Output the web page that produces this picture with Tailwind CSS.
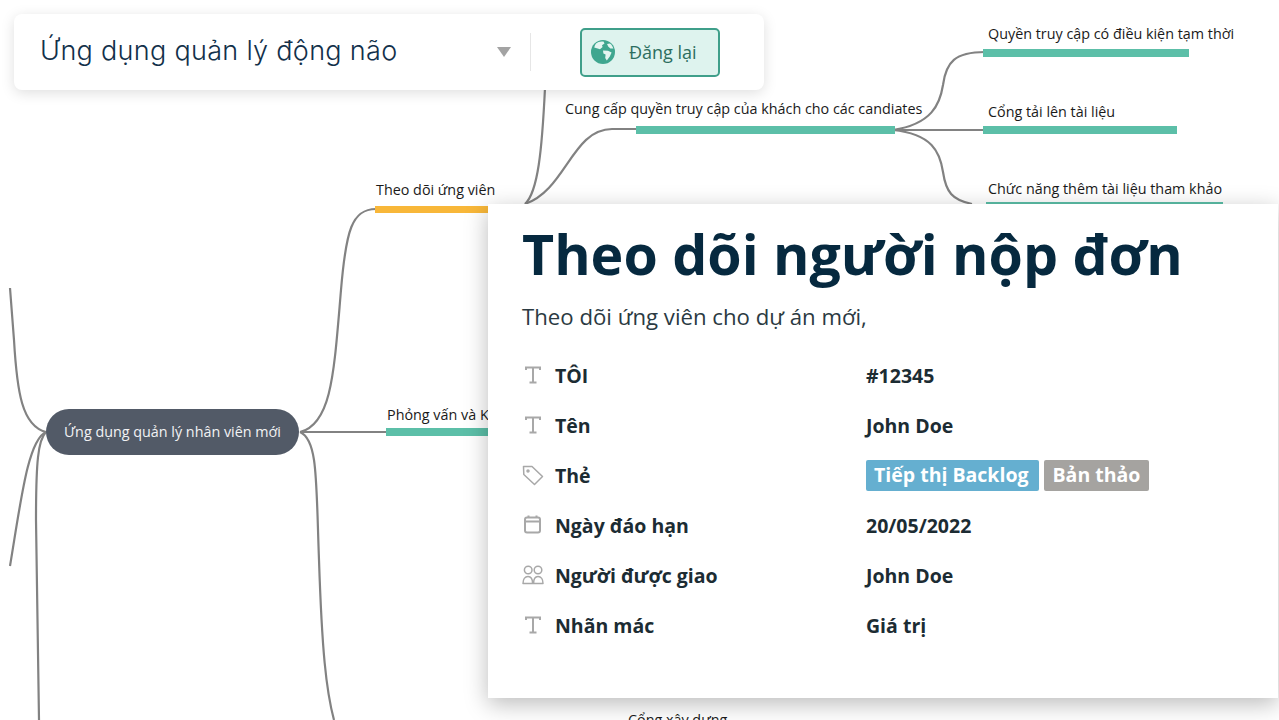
<!DOCTYPE html>
<html lang="en">
<head>
  <meta charset="UTF-8" />
  <meta name="viewport" content="width=device-width, initial-scale=1.0" />
  <title>Theo dõi người nộp đơn</title>
  <script src="https://cdn.jsdelivr.net/npm/@tailwindcss/browser@4"></script>
</head>
<body class="bg-white overflow-hidden font-['Open_Sans',sans-serif]">
  <div class="relative w-[1279px] h-[720px] overflow-hidden bg-white">

    <!-- mind map connectors -->
    <svg class="absolute inset-0" width="1279" height="720" fill="none" stroke="#828282" stroke-width="2.2">
      <path d="M300 432C332 424 334 372 341 290C346 230 352 209 376 209" />
      <path d="M300 432H388" />
      <path d="M300 432C318 440 316 480 319 560C322 650 326 690 334 720" />
      <path d="M46 432C22 426 17 392 14 340L10 288" />
      <path d="M46 432C28 440 21 500 10 566" />
      <path d="M46 432C38 440 36 462 36 520C37 600 39 680 39 720" />
      <path d="M525 204C538 192 542 150 545 88" />
      <path d="M525 204C566 190 572 129 612 129H638" />
      <path d="M893 130C932 124 940 104 943 85C946 62 955 52 985 52" />
      <path d="M893 130H985" />
      <path d="M893 130C932 134 940 152 943 172C946 192 952 200 972 204" />
    </svg>

    <!-- mind map nodes -->
    <div class="absolute left-[46px] top-[409px] w-[253px] h-[46px] rounded-[23px] bg-[#525a67] flex items-center justify-center text-[14.35px] text-[#f1f2f4]">Ứng dụng quản lý nhân viên mới</div>

    <div class="absolute left-[376px] top-[180px] text-[14.35px] leading-[19px] text-[#1a1a1a]">Theo dõi ứng viên</div>
    <div class="absolute left-[375px] top-[206px] w-[114px] h-[7px] bg-[#f8b739]"></div>

    <div class="absolute left-[387px] top-[405px] text-[14.35px] leading-[19px] text-[#1a1a1a]">Phỏng vấn và Kiểm tra</div>
    <div class="absolute left-[386px] top-[428px] w-[110px] h-[8px] bg-[#5cbfa8]"></div>

    <div class="absolute left-[565px] top-[99px] text-[14.35px] leading-[19px] text-[#1a1a1a]">Cung cấp quyền truy cập của khách cho các candiates</div>
    <div class="absolute left-[636px] top-[126px] w-[259px] h-[8px] bg-[#5cbfa8]"></div>

    <div class="absolute left-[988px] top-[24px] text-[14.35px] leading-[19px] text-[#1a1a1a]">Quyền truy cập có điều kiện tạm thời</div>
    <div class="absolute left-[983px] top-[49px] w-[206px] h-[8px] bg-[#5cbfa8]"></div>

    <div class="absolute left-[988px] top-[102px] text-[14.35px] leading-[19px] text-[#1a1a1a]">Cổng tải lên tài liệu</div>
    <div class="absolute left-[983px] top-[126px] w-[194px] h-[8px] bg-[#5cbfa8]"></div>

    <div class="absolute left-[988px] top-[179px] text-[14.35px] leading-[19px] text-[#1a1a1a]">Chức năng thêm tài liệu tham khảo</div>
    <div class="absolute left-[986px] top-[202px] w-[237px] h-[8px] bg-[#5cbfa8]"></div>

    <div class="absolute left-[628px] top-[710px] text-[14.35px] leading-[19px] text-[#1a1a1a]">Cổng xây dựng</div>

    <!-- toolbar -->
    <div class="absolute left-[14px] top-[14px] w-[750px] h-[76px] rounded-lg bg-white shadow-[0_3px_14px_rgba(0,0,0,0.13)] flex items-center">
      <h2 class="ml-[26px] mb-[1px] w-[457px] text-[27px] font-light font-['Inter',sans-serif] tracking-[0.3px] text-[#12304a]">Ứng dụng quản lý động não</h2>
      <svg width="14" height="10" viewBox="0 0 14 10" class="shrink-0"><path d="M0 0H14L7 10Z" fill="#a3a3a3" /></svg>
      <div class="ml-[19px] w-px h-[38px] bg-[#e6e6e6]"></div>
      <button class="ml-[49px] w-[140px] h-[49px] rounded-[5px] border-2 border-[#3f9f8a] bg-[#def3ee] flex items-center text-[#2c6e60] text-[18px]">
        <svg width="24" height="24" viewBox="0 0 24 24" class="ml-[9px] shrink-0">
          <circle cx="12" cy="12" r="12" fill="#3fa68f" />
          <path d="M5 3.5C7 1.6 10 1 12.5 1.6L13.5 3.6L11 5.2L11.6 7L9 9.2L5.8 8.2L3.2 7.4C3.6 6 4.2 4.6 5 3.5Z" fill="#e4f5f1" />
          <path d="M16 4L19 3.4C20.6 4.8 21.8 6.6 22.4 8.6L19.4 8.4L17.4 6.8Z" fill="#e4f5f1" />
          <path d="M12 10.6L17 10.8L20.6 12.6L18.8 16.6L15.8 20.4L14.2 18L14.6 14.6L12.4 13.4Z" fill="#e4f5f1" />
        </svg>
        <span class="ml-[14px]">Đăng lại</span>
      </button>
    </div>

    <!-- detail card -->
    <section class="absolute left-[488px] top-[204px] w-[790px] h-[494px] bg-white shadow-[0_6px_22px_rgba(0,0,0,0.27)] pl-[34px] pt-[15px] text-[#1c2c33]">
      <h1 class="text-[55.5px] leading-[70px] font-bold text-[#06293f]">Theo dõi người nộp đơn</h1>
      <p class="mt-[13px] text-[22.2px] leading-[30px] text-[#2b3a42]">Theo dõi ứng viên cho dự án mới,</p>

      <div class="mt-[19px] flex flex-col text-[19.5px] font-bold">
        <div class="h-[50px] flex items-center">
          <svg width="22" height="22" viewBox="0 0 22 22" fill="none" stroke="#a8a8a8" stroke-width="2" class="shrink-0 mb-[2px]"><path d="M4 6V3.5H18V6M11 3.5V18.5M7.5 18.5H14.5" /></svg>
          <span class="ml-[11px] w-[311px]">TÔI</span><span>#12345</span>
        </div>
        <div class="h-[50px] flex items-center">
          <svg width="22" height="22" viewBox="0 0 22 22" fill="none" stroke="#a8a8a8" stroke-width="2" class="shrink-0 mb-[2px]"><path d="M4 6V3.5H18V6M11 3.5V18.5M7.5 18.5H14.5" /></svg>
          <span class="ml-[11px] w-[311px]">Tên</span><span>John Doe</span>
        </div>
        <div class="h-[50px] flex items-center">
          <svg width="22" height="22" viewBox="0 0 22 22" fill="none" stroke="#a8a8a8" stroke-width="1.5" class="shrink-0 mb-[2px]"><path d="M1.5 2.5H10L20.5 12.5L12.5 20.5L1.8 10.5Z" stroke-linejoin="round" /><circle cx="6" cy="7" r="1" /></svg>
          <span class="ml-[11px] w-[311px]">Thẻ</span>
          <span class="h-[31px] mb-[2px] pl-[8px] pr-[10px] rounded-[2px] bg-[#65afd0] text-white flex items-center">Tiếp thị Backlog</span>
          <span class="ml-[5px] h-[31px] mb-[2px] px-[9px] rounded-[2px] bg-[#a5a3a0] text-white flex items-center">Bản thảo</span>
        </div>
        <div class="h-[50px] flex items-center">
          <svg width="22" height="22" viewBox="0 0 22 22" fill="none" stroke="#a8a8a8" stroke-width="2" class="shrink-0 mb-[2px]"><rect x="3" y="3.5" width="15" height="15" rx="2" /><path d="M3 7.5H18M6.5 1.5V3.5M14.5 1.5V3.5" /></svg>
          <span class="ml-[11px] w-[311px]">Ngày đáo hạn</span><span>20/05/2022</span>
        </div>
        <div class="h-[50px] flex items-center">
          <svg width="22" height="22" viewBox="0 0 22 22" fill="none" stroke="#a8a8a8" stroke-width="1.5" class="shrink-0 mb-[2px]"><circle cx="6.2" cy="6" r="3.8" /><circle cx="16" cy="6" r="3.8" /><path d="M1 19.5C1 15.5 3 12.5 6 12.5C9 12.5 10.6 15.5 10.6 19.5ZM11.6 19.5C11.6 15.5 13 12.5 16 12.5C19 12.5 21 15.5 21 19.5Z" stroke-linejoin="round" /></svg>
          <span class="ml-[11px] w-[311px]">Người được giao</span><span>John Doe</span>
        </div>
        <div class="h-[50px] flex items-center">
          <svg width="22" height="22" viewBox="0 0 22 22" fill="none" stroke="#a8a8a8" stroke-width="2" class="shrink-0 mb-[2px]"><path d="M4 6V3.5H18V6M11 3.5V18.5M7.5 18.5H14.5" /></svg>
          <span class="ml-[11px] w-[311px]">Nhãn mác</span><span>Giá trị</span>
        </div>
      </div>
    </section>
  </div>
</body>
</html>
